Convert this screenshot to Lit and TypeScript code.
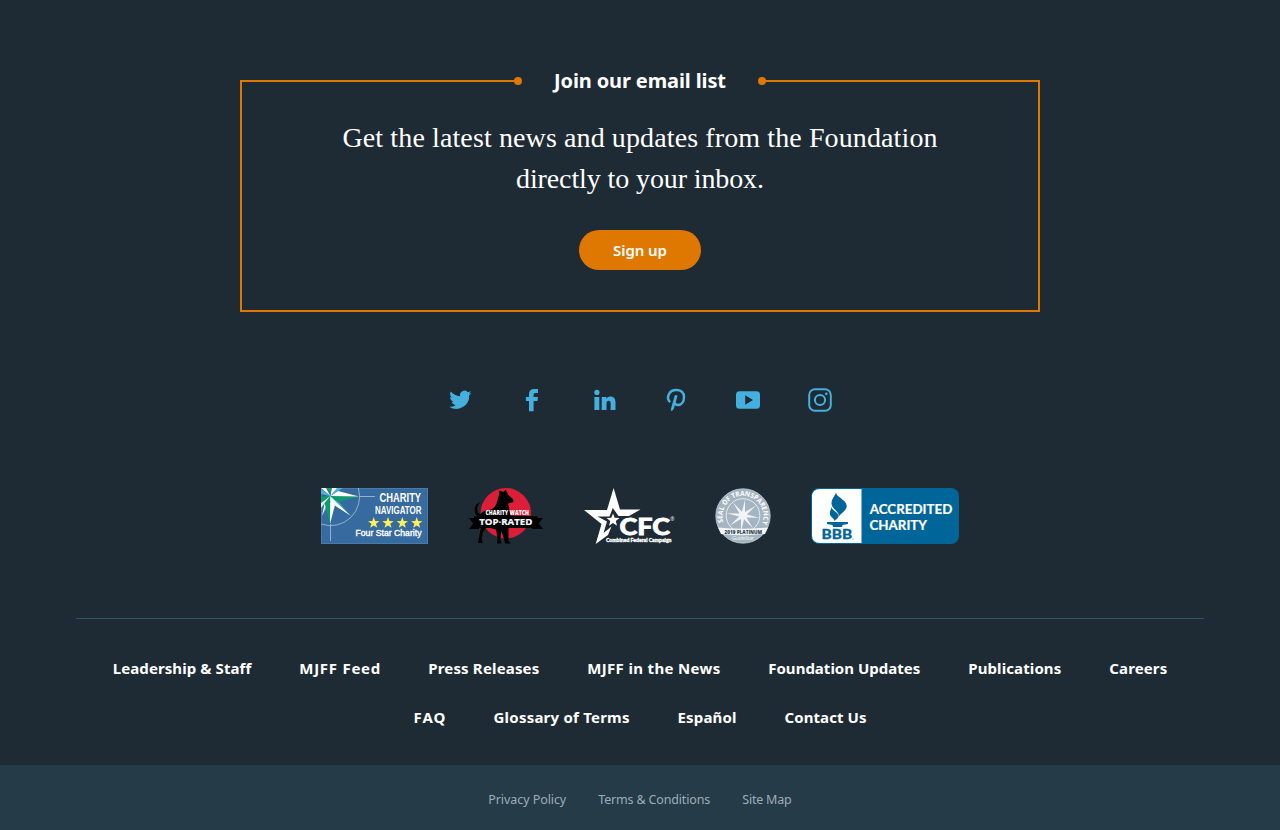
import { LitElement, html, css, svg } from "lit";
import { customElement, property } from "lit/decorators.js";
import { styleMap } from "lit/directives/style-map.js";

/** A single line of text tracked out (or in) to fill a given measure. */
@customElement("fit-text")
class FitText extends LitElement {
  @property({ type: Number }) measure = 0;
  @property() text = "";

  static styles = css`
    :host { display: inline-block; text-align: left; white-space: nowrap; }
    .run { display: inline-block; }
  `;

  firstUpdated() {
    const run = this.renderRoot.querySelector(".run") as HTMLElement;
    const gap = (this.measure - run.getBoundingClientRect().width) / (this.text.length - 1);
    run.style.letterSpacing = `${gap}px`;
    run.style.marginRight = `${-gap}px`;
  }

  render() {
    return html`<span class="run">${this.text}</span>`;
  }
}

interface Link { text: string; width: number; }

const primary: Link[][] = [
  [
    { text: "Leadership & Staff", width: 138.5 },
    { text: "MJFF Feed", width: 81 },
    { text: "Press Releases", width: 111 },
    { text: "MJFF in the News", width: 133 },
    { text: "Foundation Updates", width: 152 },
    { text: "Publications", width: 93 },
    { text: "Careers", width: 58 },
  ],
  [
    { text: "FAQ", width: 32 },
    { text: "Glossary of Terms", width: 136 },
    { text: "Español", width: 59 },
    { text: "Contact Us", width: 82 },
  ],
];

const legal: Link[] = [
  { text: "Privacy Policy", width: 78 },
  { text: "Terms & Conditions", width: 112 },
  { text: "Site Map", width: 49.5 },
];

const star = (cx: number, cy: number, r: number, inner = 0.4) =>
  Array.from({ length: 10 }, (_, i) => {
    const a = (i * Math.PI) / 5 - Math.PI / 2;
    const d = i % 2 ? r * inner : r;
    return `${(cx + d * Math.cos(a)).toFixed(2)},${(cy + d * Math.sin(a)).toFixed(2)}`;
  }).join(" ");

const social = [
  svg`<path d="M23.4 4.9c-.8.4-1.7.6-2.6.7.9-.6 1.600-1.400 2-2.500-.9.500-1.800.900-2.900 1.100A4.550 4.550 0 0 0 12.100 8.300C8.300 8.100 5 6.300 2.700 3.600c-1.200 2.100-.600 4.800 1.400 6.100-.700 0-1.400-.200-2.100-.600 0 2.200 1.500 4.100 3.700 4.500-.700.200-1.400.200-2.100.1.600 1.800 2.300 3.100 4.300 3.200A9.200 9.200 0 0 1 1.200 18.800 13 13 0 0 0 21.200 7.200c.9-.600 1.700-1.400 2.200-2.300z"/>`,
  svg`<path d="M9 23.300V13H5.900V9H9V6.300C9 2.900 10.800 1 14.200 1H18v4h-2.400C14 5 13.600 5.700 13.600 7v2H18l-.5 4h-3.900v10.300z"/>`,
  svg`<circle cx="4.900" cy="4.400" r="2.600"/><path d="M2.400 9h4.900v13H2.400zM9.700 9h4.600v1.700c.900-1.400 2.300-2.100 4-2.100 3.600 0 5.200 2.200 5.200 6V22h-4.900v-6.600c0-1.700-.400-2.700-1.900-2.700-1.600 0-2.200 1.100-2.200 2.700V22H9.700z"/>`,
  svg`<path fill="none" stroke="currentColor" stroke-width="2.500" d="M6.200 14.100C1.800 10.500 4.500 2 12.200 2c5.200 0 7.800 3.100 7.800 6.900 0 4.800-2.500 8-6 8-1.900 0-3.100-.9-3.600-2.200"/><path d="m10.900 7 2.700.5L9.800 21 7.400 23.500 6.900 21z"/>`,
  svg`<path fill-rule="evenodd" d="M3.500 3.200h17Q24 3.200 24 6.700v10.600q0 3.500-3.500 3.500h-17Q0 20.800 0 17.300V6.700Q0 3.200 3.500 3.200zM9.200 7.300v9.500l7.800-4.750z"/>`,
  svg`<g fill="none" stroke="currentColor" stroke-width="2"><rect x="1.200" y="1.200" width="21.600" height="21.600" rx="5.800"/><circle cx="12" cy="12" r="5.100"/></g><circle cx="18.300" cy="5.800" r="1.400"/>`,
];

const navigatorLogo = html`
  <svg class="logo" width="107" height="56" viewBox="0 0 107 56">
    <rect width="107" height="56" fill="#376a9e"/>
    <rect x=".5" y=".5" width="106" height="55" fill="none" stroke="#477bab"/>
    <g fill="none" stroke="#91b3ce"><path d="M38 8.500H54M9.500 36V53"/><path d="M37.300 0A29 29 0 0 1 0 36"/></g>
    <path d="M9.300 8 0 8.500V14z" fill="#079e69"/>
    <path d="M9.300 8 0 15v5z" fill="#d8eff0"/>
    <path d="M9.300 8 1 28l7-12z" fill="#4aaddf"/><path d="M9.300 8 1 28l3-15z" fill="#fff"/>
    <path d="M9.300 8 9 36 3.500 15z" fill="#079e69"/><path d="M9.300 8 9 36l5.200-20z" fill="#fff"/>
    <path d="M9.300 8 30 28 13 17z" fill="#fff"/><path d="M9.300 8 30 28 17 13z" fill="#36a5dc"/>
    <path d="M9.300 8 38 8.500 17 14z" fill="#079e69"/><path d="M9.300 8 38 8.500 17 3z" fill="#fff"/>
    <path d="M9.300 8 22 0h-6z" fill="#4bb1dd"/><path d="M9.300 8 16 0h-5z" fill="#fff"/>
    <path d="M9.300 8 10 0H6z" fill="#079e69"/><path d="M9.300 8 5 0H0z" fill="#fff"/><path d="M9.300 8 0 1v5z" fill="#4bb1dd"/>
    <g fill="#fff" class="narrow" font-weight="700">
      <text transform="translate(58.500 14.300) scale(.8 1.150)" font-size="10.500" textLength="52" lengthAdjust="spacingAndGlyphs">CHARITY</text>
      <text transform="translate(54 25.800) scale(.75 1.150)" font-size="10" textLength="62" lengthAdjust="spacingAndGlyphs">NAVIGATOR</text>
      <text x="34.500" y="48.300" font-size="8.800" font-weight="400" stroke="#fff" stroke-width=".35" textLength="66" lengthAdjust="spacingAndGlyphs">Four Star Charity</text>
    </g>
    <g fill="#fff05a">${[52.7, 67, 81.300, 95.7].map((x) => svg`<polygon points=${star(x, 35, 6)}/>`)}</g>
  </svg>`;

const watchLogo = html`
  <svg class="logo" width="74" height="56" viewBox="0 0 74 56">
    <circle cx="36.800" cy="25.200" r="25.200" fill="#dc1e38"/>
    <g fill="#000">
      <path d="M30 6.500 30.500 2.500 34 4l3-2.500 1.800 5L44 11l.5 3-5.500 1.500 1.500 6.500 1.500 7-2.500 12v12l2.200 2.500h-5.400L32.500 43l-1.200 8 1.200 4.500h-4.300l.3-5-1.500-9-9-2.500-4 5-1.300 6.500 1 4.500H9l.8-4.500 2-10-1.300-9C10.500 24 15 22.500 20 22c4.500-1 7-4 8-8z"/>
      <path d="M12 30C8 29 5.500 26.500 5.800 21c.2-3.500 2.500-6 6-7-3.500 3-4.300 6.500-3 10 1 2 3 3 5 3z"/>
      <path d="M0 30h10v11H0l4-5.500zM74 30H63v11h11l-4.300-5.500z"/>
      <path d="M5 28.500Q36 26.500 68.500 28.500V40H5z"/>
    </g>
    <g fill="#fff" class="sans">
      <text x="16.500" y="27.200" font-size="6" font-weight="800" textLength="43.500" lengthAdjust="spacingAndGlyphs">CHARITY WATCH</text>
      <text x="10.300" y="37.300" font-size="9.600" font-weight="700" stroke="#fff" stroke-width=".2" textLength="53" lengthAdjust="spacingAndGlyphs">TOP<tspan fill="#f0d348">·</tspan>RATED</text>
    </g>
  </svg>`;

const cfcLogo = html`
  <svg class="logo cfc" width="91" height="56" viewBox="0 0 91 56">
    <path fill="#fff" d="M29.600 0 36 21.500H56.500L45 28H34.500L28.800 20l-3.300 8.500H13.500L23 33.500 19.500 45l8-6.500L24 47 11.700 56 17.500 36 0 22h23z"/>
    <polygon fill="#fff" points=${star(29, 32.200, 6.800, 0.43)}/>
    <text class="geo" x="35.500" y="46.800" fill="#fff" stroke="#fff" stroke-width=".8" font-size="23.500" font-weight="900" textLength="50.500" lengthAdjust="spacingAndGlyphs">CFC</text>
    <text class="sans" x="86.300" y="32.500" fill="#fff" font-size="5">®</text>
    <text class="geo" x="22" y="53.500" fill="#fff" stroke="#fff" stroke-width=".3" font-size="5" font-weight="900" textLength="65.500" lengthAdjust="spacingAndGlyphs">Combined Federal Campaign</text>
  </svg>`;

const burst = Array.from({ length: 16 }, (_, i) => {
  const a = (i * Math.PI) / 8 + 0.13;
  const d = i % 2 ? 4 : 16.500;
  return `${28 + d * Math.cos(a)},${27.500 + d * Math.sin(a)}`;
}).join(" ");

const sealLogo = html`
  <svg class="logo" width="56" height="56" viewBox="0 0 56 56">
    <circle cx="28" cy="28" r="27.200" fill="#a4b4c1" stroke="#c3cdd5" stroke-width=".8"/>
    <circle cx="28" cy="27.500" r="16.800" fill="#a4b4c1" stroke="#e7edf1" stroke-width="1"/>
    <polygon points=${burst} fill="#f1f4f6"/>
    <path id="arc" d="M9.400 37A20.500 20.500 0 1 1 46.600 37" fill="none"/>
    <text class="sans" fill="#fff" font-size="7" font-weight="700"><textPath href="#arc" startOffset="3" textLength="78" lengthAdjust="spacingAndGlyphs">SEAL OF TRANSPARENCY</textPath></text>
    <path d="M3 39.500Q28 42 53 39.500L50 46Q28 48.500 6 46z" fill="#f3f6f8"/>
    <text class="sans" x="9.500" y="45.500" fill="#33424d" font-size="5.600" font-weight="800" textLength="37.500" lengthAdjust="spacingAndGlyphs">2019 PLATINUM</text>
    <text class="sans" x="17" y="52.300" fill="#f0f4f6" font-size="5.500" textLength="22">GuideStar</text>
  </svg>`;

const bbbLogo = html`
  <svg class="logo" width="148" height="56" viewBox="0 0 148 56">
    <rect width="148" height="56" rx="8" fill="#006699"/>
    <path d="M50.500 1V55H9Q1 55 1 47V9Q1 1 9 1z" fill="#fff"/>
    <g fill="#00669a">
      <path d="M25 4.300C24.500 9 36 12 35.700 18C35.500 22.500 31 24.500 27.500 28.500C29 23.500 20.500 21 20.500 15.500C20.500 10.500 24 8.500 25 4.300z"/>
      <path d="M20.500 18.500C20.500 23 28.200 24 27.500 28.500C27 31 24 31.500 23.500 33.200C23.500 30.500 18.500 29 18.800 25.300C19 22 20.500 21 20.500 18.500z"/>
      <path d="M16 34h21v2l-5.500 1-.5 2H22l-.5-2-5.500-1z"/>
      <text class="geo" x="10.600" y="51.200" stroke="#00669a" stroke-width=".3" font-size="14" font-weight="900" textLength="30.500" lengthAdjust="spacingAndGlyphs">BBB</text>
      <circle cx="42" cy="51" r=".5"/>
    </g>
    <g fill="#fff" stroke="#fff" stroke-width=".2" class="geo">
      <text x="58.800" y="26.400" font-size="12.800" font-weight="700" textLength="82.500" lengthAdjust="spacingAndGlyphs">ACCREDITED</text>
      <text x="58.500" y="41.500" font-size="12.800" font-weight="700" textLength="57.500" lengthAdjust="spacingAndGlyphs">CHARITY</text>
    </g>
  </svg>`;

@customElement("app-root")
class AppRoot extends LitElement {
  static styles = css`
    :host {
      display: flex;
      flex-direction: column;
      height: 830px;
      box-sizing: border-box;
      padding-top: 80px;
      background: #1e2b34;
      color: #fff;
      overflow: hidden;
      font-family: "Noto Sans", "Open Sans", sans-serif;
    }
    .signup {
      box-sizing: border-box;
      width: 800px;
      height: 232px;
      margin: 0 auto;
      border: 2px solid #df7800;
      border-top: 0;
      display: flex;
      flex-direction: column;
      align-items: center;
    }
    .heading {
      align-self: stretch;
      display: flex;
      align-items: center;
      height: 2px;
      margin: 0 -2px;
    }
    .rule { flex: 1; height: 2px; background: #df7800; }
    .dot { width: 8px; height: 8px; margin-left: -4px; border-radius: 50%; background: #df7800; }
    .dot.end { margin: 0 -4px 0 0; }
    .title { margin: 0 32px; font-size: 20px; line-height: 28px; font-weight: 700; }
    .lead {
      margin: 35px 0 0;
      display: flex;
      flex-direction: column;
      align-items: center;
      font: 28px/41px "Liberation Serif", serif;
    }
    .button {
      margin-top: 31px;
      width: 122px;
      height: 40px;
      border: 0;
      padding: 0;
      border-radius: 20px;
      background: #df7800;
      color: #fff;
      font: 600 15px/40px "Noto Sans", sans-serif;
    }
    .social { display: flex; justify-content: center; gap: 48px; margin-top: 76px; color: #45b0dd; }
    .social svg { display: block; }
    .logos { display: flex; justify-content: center; gap: 40.5px; margin-top: 76px; }
    .logo { display: block; }
    .logo.cfc { margin: 0 -1px 0 1px; }
    .narrow { font-family: "Liberation Sans Narrow", "Liberation Sans", sans-serif; }
    .sans { font-family: "Open Sans", sans-serif; }
    .geo { font-family: Lato, sans-serif; }
    .nav { margin: 74px 76px 0; border-top: 1px solid #315468; padding-top: 37px; }
    .row { display: flex; justify-content: center; gap: 48px; height: 24px; margin-bottom: 25px; font-size: 15px; line-height: 24px; font-weight: 700; }
    .legal {
      display: flex;
      justify-content: center;
      gap: 32px;
      flex: 1;
      margin-top: 11px;
      padding-top: 25px;
      background: #263b48;
      color: #9badb8;
      font-size: 12.5px;
      line-height: 20px;
    }
  `;

  private fit(l: Link) {
    return html`<fit-text .text=${l.text} .measure=${l.width} style=${styleMap({ width: `${l.width}px` })}></fit-text>`;
  }

  render() {
    return html`
      <section class="signup">
        <div class="heading">
          <span class="rule"></span><span class="dot"></span>
          <span class="title">${this.fit({ text: "Join our email list", width: 172 })}</span>
          <span class="dot end"></span><span class="rule"></span>
        </div>
        <div class="lead">
          ${this.fit({ text: "Get the latest news and updates from the Foundation", width: 595 })}
          ${this.fit({ text: "directly to your inbox.", width: 248 })}
        </div>
        <button class="button">${this.fit({ text: "Sign up", width: 54 })}</button>
      </section>
      <div class="social">
        ${social.map((s) => html`<svg width="24" height="24" viewBox="0 0 24 24" fill="currentColor">${s}</svg>`)}
      </div>
      <div class="logos">${navigatorLogo}${watchLogo}${cfcLogo}${sealLogo}${bbbLogo}</div>
      <nav class="nav">
        ${primary.map((row) => html`<div class="row">${row.map((l) => this.fit(l))}</div>`)}
      </nav>
      <footer class="legal">${legal.map((l) => this.fit(l))}</footer>
    `;
  }
}
